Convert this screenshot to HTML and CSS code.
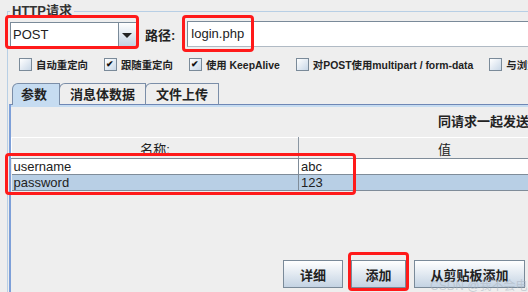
FILE: index.html
```html
<!DOCTYPE html>
<html lang="zh-CN">
<head>
  <meta charset="UTF-8" />
  <title>HTTP请求</title>
  <link rel="stylesheet" href="styles.css">
</head>
<body>
  <fieldset class="http-group">
    <legend>HTTP请求</legend>

    <div class="request-line">
      <div class="combo">
        <span class="combo-value">POST</span>
        <span class="combo-arrow"></span>
      </div>
      <span class="path-label">路径:</span>
      <div class="text-field">login.php</div>
    </div>

    <div class="options">
      <label class="check"><span class="box"></span>自动重定向</label>
      <label class="check"><span class="box checked">✔</span>跟随重定向</label>
      <label class="check"><span class="box checked">✔</span>使用 KeepAlive</label>
      <label class="check"><span class="box"></span>对POST使用multipart / form-data</label>
      <label class="check"><span class="box"></span>与浏览器兼容的头</label>
    </div>

    <div class="tabs">
      <div class="tab active">参数</div>
      <div class="tab">消息体数据</div>
      <div class="tab">文件上传</div>
    </div>

    <div class="tab-panel">
      <div class="panel-title">同请求一起发送参数：</div>
      <table class="params">
        <thead>
          <tr><th class="col-name">名称:</th><th class="col-value">值</th></tr>
        </thead>
        <tbody>
          <tr><td>username</td><td>abc</td></tr>
          <tr class="selected"><td>password</td><td>123</td></tr>
        </tbody>
      </table>
      <div class="buttons">
        <button class="btn btn-detail">详细</button>
        <button class="btn btn-add">添加</button>
        <button class="btn btn-clip">从剪贴板添加</button>
      </div>
    </div>
  </fieldset>

  <!-- 标注的红框 -->
  <div class="mark mark-method"></div>
  <div class="mark mark-path"></div>
  <div class="mark mark-rows"></div>
  <div class="mark mark-add"></div>
  <div class="watermark">CSDN @我不会电脑</div>
</body>
</html>
```

FILE: styles.css
```css
body {
  margin: 0;
  width: 528px;
  height: 292px;
  overflow: hidden;
  position: relative;
  background: #eeeeee;
  font-family: 'Liberation Sans', 'Noto Sans CJK SC', sans-serif;
  font-size: 13px;
  color: #222;
}

.http-group {
  margin: 3px 0 0 7px;
  padding: 2px 0 0 2px;
  width: 640px;
  height: 300px;
  border: 1px solid #b8cfe5;
  box-sizing: border-box;
}

.http-group legend {
  padding: 0 2px;
  font-weight: 700;
  line-height: 16px;
  color: #333;
}

.request-line {
  display: flex;
  align-items: center;
  height: 26px;
}

.combo {
  display: flex;
  width: 127px;
  height: 25px;
  border: 1px solid #7a8a99;
  box-sizing: border-box;
}

.combo-value {
  flex: 1;
  background: #fff;
  padding-left: 2px;
  line-height: 23px;
}

.combo-arrow {
  width: 17px;
  border-left: 1px solid #7a8a99;
  background: linear-gradient(to bottom, #ffffff, #c3d2e2);
  position: relative;
}

.combo-arrow::after {
  content: '';
  position: absolute;
  left: 3px;
  top: 10px;
  border-left: 5px solid transparent;
  border-right: 5px solid transparent;
  border-top: 5px solid #222;
}

.path-label {
  margin: 0 12px 0 8px;
  font-weight: 700;
}

.text-field {
  flex: 1;
  height: 26px;
  line-height: 24px;
  padding-left: 3px;
  background: #fff;
  border: 1px solid #7a8a99;
  border-right: none;
  border-bottom-color: #b0bac4;
  box-sizing: border-box;
}

.options {
  display: flex;
  gap: 16px;
  margin-top: 10px;
  padding-left: 9px;
  font-size: 10.4px;
  font-weight: 700;
  white-space: nowrap;
}

.check {
  display: flex;
  align-items: center;
  gap: 4px;
  height: 14px;
}

.box {
  width: 13px;
  height: 13px;
  box-sizing: border-box;
  border: 1px solid #7a8a99;
  background: linear-gradient(to bottom right, #ffffff, #c8d7e7);
  font-size: 9px;
  line-height: 11px;
  text-align: center;
  color: #111;
}

.tabs {
  display: flex;
  margin: 12px 0 -1px 2px;
  position: relative;
  z-index: 1;
}

.tab {
  height: 22px;
  line-height: 22px;
  padding: 0 10px;
  margin-right: -1px;
  border: 1px solid #7b8ea8;
  border-bottom: none;
  border-top-left-radius: 6px;
  box-sizing: border-box;
  font-weight: 700;
  color: #222;
}

.tab.active {
  background: #c6dcf1;
  padding: 0 12px 0 8px;
}

.tab-panel {
  display: flex;
  flex-direction: column;
  height: 187px;
  margin-left: -1px;
  border-top: 1px solid #6f87b5;
  border-left: 2px solid #7d9fd8;
  border-bottom: 1px solid #b8cfe5;
  box-shadow: inset 0 2px 0 #c6dcf1;
}

.panel-title {
  margin-top: 9px;
  padding-left: 427px;
  font-weight: 700;
  line-height: 15px;
  white-space: nowrap;
}

.params {
  margin-top: 8px;
  width: 620px;
  border-collapse: collapse;
}

.params th {
  height: 20px;
  font-weight: 400;
  background: #eeeeee;
  border-top: 1px solid #fff;
  border-bottom: 1px solid #7f8c99;
  padding: 0;
}

.params th.col-name {
  width: 286px;
  border-left: 1px solid #fff;
  border-right: 1px solid #8a96a2;
}

.params th.col-value {
  text-align: left;
  padding-left: 139px;
}

.params td {
  height: 15px;
  padding: 0 2px;
  line-height: 15px;
  background: #fff;
  border-bottom: 1px solid #7f8c99;
}

.params td:first-child {
  border-right: 1px solid #7f8c99;
}

.params tr.selected td {
  background: #b8cfe5;
}

.buttons {
  display: flex;
  gap: 8px;
  margin-top: auto;
  margin-bottom: 4px;
  padding-left: 272px;
}

.btn {
  height: 28px;
  padding: 0;
  border: 1px solid #7a8a99;
  background: linear-gradient(to bottom, #ffffff, #c4d3e3);
  font-family: inherit;
  font-size: 13px;
  font-weight: 700;
  color: #222;
}

.btn-detail { width: 60px; }
.btn-add { width: 55px; }
.btn-clip { width: 111px; }

.mark {
  position: absolute;
  border: 3px solid #ff1a1a;
  border-radius: 4px;
  box-sizing: border-box;
}

.mark-method { left: 5px; top: 15px; width: 134px; height: 34px; }
.mark-path { left: 182px; top: 15px; width: 72px; height: 37px; }
.mark-rows { left: 5px; top: 153px; width: 351px; height: 42px; }
.mark-add { left: 348px; top: 252px; width: 61px; height: 39px; }

.watermark {
  position: absolute;
  left: 430px;
  top: 276px;
  font-size: 12px;
  color: rgba(170, 180, 190, 0.55);
  white-space: nowrap;
}
```
